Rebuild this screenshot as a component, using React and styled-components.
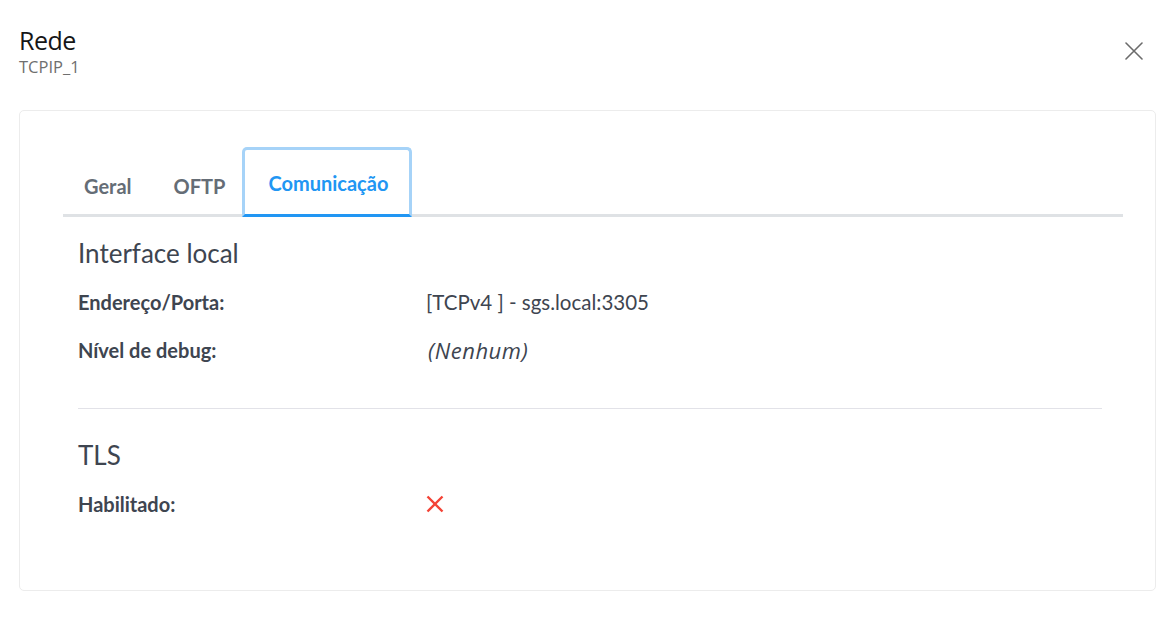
import React, { useState } from "react";
import styled, { createGlobalStyle } from "styled-components";

const GlobalStyle = createGlobalStyle`
    body {
        margin: 0;
        background: #ffffff;
        font-family: "Lato", "Open Sans", sans-serif;
    }
`;

const TABS = ["Geral", "OFTP", "Comunicação"];

const App = () => {
    const [activeTab, setActiveTab] = useState(2);

    return (
        <>
            <GlobalStyle />
            <Page>
                <Header>
                    <TitleBlock>
                        <Title>Rede</Title>
                        <Subtitle>TCPIP_1</Subtitle>
                    </TitleBlock>
                    <CloseButton aria-label="Fechar">
                        <svg width="18" height="18" viewBox="0 0 18 18">
                            <path
                                d="M1 1 L17 17 M17 1 L1 17"
                                stroke="#6b6b6b"
                                strokeWidth="1.6"
                                strokeLinecap="round"
                            />
                        </svg>
                    </CloseButton>
                </Header>

                <Card>
                    <TabBar>
                        {TABS.map((tab, i) => (
                            <Tab
                                key={tab}
                                $active={i === activeTab}
                                onClick={() => setActiveTab(i)}
                            >
                                {tab}
                            </Tab>
                        ))}
                    </TabBar>

                    <TabContent>
                        <Section>
                            <SectionTitle>Interface local</SectionTitle>
                            <Row>
                                <Label>Endereço/Porta:</Label>
                                <Value>[TCPv4 ] - sgs.local:3305</Value>
                            </Row>
                            <Row>
                                <Label>Nível de debug:</Label>
                                <Value $italic>(Nenhum)</Value>
                            </Row>
                        </Section>

                        <Divider />

                        <Section>
                            <SectionTitle>TLS</SectionTitle>
                            <Row>
                                <Label>Habilitado:</Label>
                                <Value>
                                    <svg width="18" height="18" viewBox="0 0 18 18">
                                        <path
                                            d="M1.5 1.5 L16.5 16.5 M16.5 1.5 L1.5 16.5"
                                            stroke="#f44336"
                                            strokeWidth="2.4"
                                        />
                                    </svg>
                                </Value>
                            </Row>
                        </Section>
                    </TabContent>
                </Card>
            </Page>
        </>
    );
};

export default App;

const Page = styled.div`
    padding: 24px 20px 36px 19px;
`;

const Header = styled.div`
    display: flex;
    align-items: center;
    justify-content: space-between;
    margin-bottom: 33px;
`;

const TitleBlock = styled.div`
    display: flex;
    flex-direction: column;
`;

const Title = styled.div`
    font-family: "Open Sans", sans-serif;
    font-size: 25px;
    line-height: 32px;
    color: #161616;
    letter-spacing: -0.5px;
`;

const Subtitle = styled.div`
    font-family: "Open Sans", sans-serif;
    font-size: 16.5px;
    line-height: 20px;
    margin-top: 1px;
    color: #6f6f6f;
`;

const CloseButton = styled.button`
    background: none;
    border: none;
    padding: 0;
    margin: 0 13px 0 0;
    display: flex;
    cursor: pointer;
`;

const Card = styled.div`
    border: 1px solid #ececec;
    border-radius: 5px;
    padding: 36px 32px 62px 43px;
`;

const TabBar = styled.div`
    display: flex;
    align-items: flex-end;
    border-bottom: 3px solid #dfe2e5;
`;

const Tab = styled.div`
    font-size: 20px;
    font-weight: 700;
    color: ${(props) => (props.$active ? "#2196f3" : "#656d76")};
    padding: ${(props) => (props.$active ? "1px 21px 0 23px" : "1px 18px 0")};
    margin-left: ${(props) => (props.$active ? "-4px" : "0")};
    height: ${(props) => (props.$active ? "70px" : "64px")};
    display: flex;
    align-items: center;
    box-sizing: border-box;
    margin-bottom: -3px;
    border: 3px solid ${(props) => (props.$active ? "#a6d3f8" : "transparent")};
    border-bottom: 3px solid
        ${(props) => (props.$active ? "#2196f3" : "transparent")};
    border-radius: 5px 5px 0 0;
    cursor: pointer;
`;

const TabContent = styled.div`
    padding: 19px 21px 0 15px;
`;

const Section = styled.div`
    display: flex;
    flex-direction: column;
`;

const SectionTitle = styled.div`
    font-size: 26px;
    line-height: 34px;
    color: #3e4550;
    margin-bottom: 8px;
`;

const Row = styled.div`
    display: flex;
    align-items: center;
    height: 48px;
`;

const Label = styled.div`
    width: 348px;
    font-size: 20px;
    font-weight: 700;
    color: #3e4550;
`;

const Value = styled.div`
    font-family: ${(props) =>
        props.$italic ? '"Open Sans", sans-serif' : '"Lato", sans-serif'};
    font-size: ${(props) => (props.$italic ? "22px" : "20.5px")};
    letter-spacing: ${(props) => (props.$italic ? "0.5px" : "0")};
    color: #3e4550;
    font-style: ${(props) => (props.$italic ? "italic" : "normal")};
    display: flex;
    align-items: center;
    padding-left: ${(props) => (props.$italic ? "2px" : "0")};
`;

const Divider = styled.div`
    height: 1px;
    background: #e2e2e8;
    margin: 34px 0 29px;
`;
